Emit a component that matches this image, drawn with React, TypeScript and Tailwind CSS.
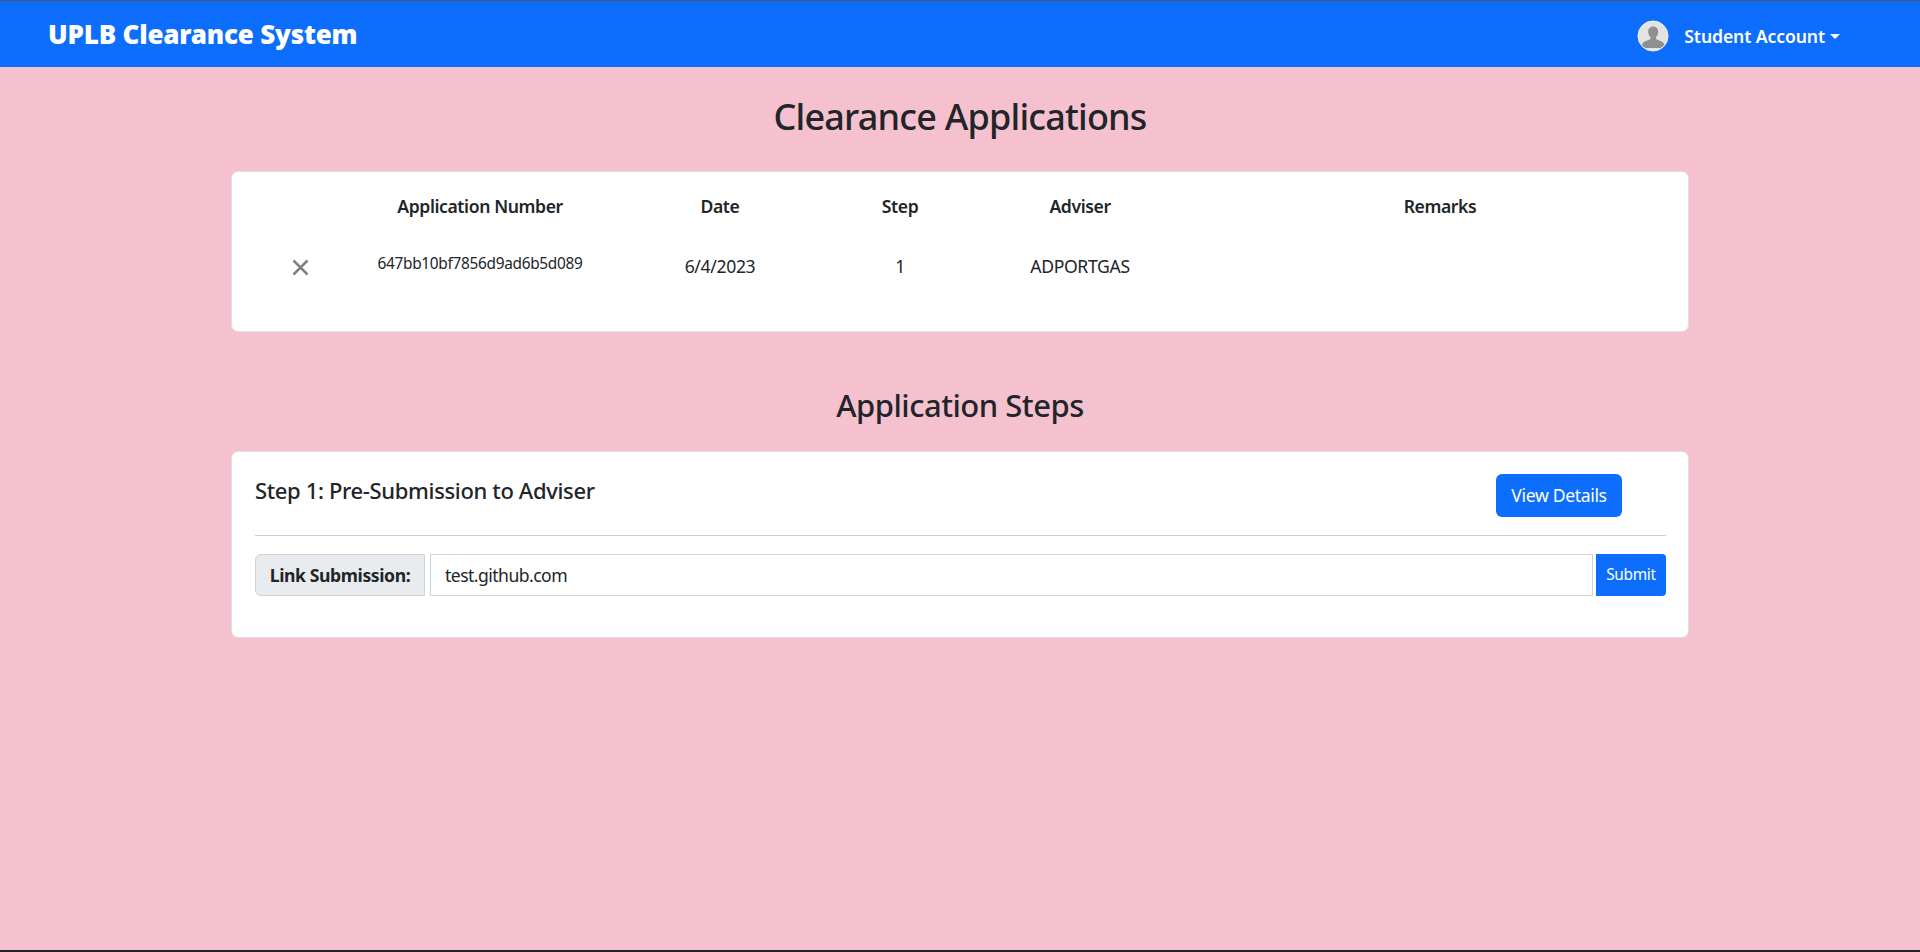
const font = "font-['Noto_Sans',sans-serif]"

const Avatar = () => (
  <svg width="32" height="32" viewBox="0 0 32 32">
    <defs>
      <clipPath id="avatar-clip">
        <circle cx="16" cy="16" r="14.5" />
      </clipPath>
    </defs>
    <circle cx="16" cy="16" r="15" fill="#e3e3e3" />
    <g clipPath="url(#avatar-clip)" fill="#8f8f8f">
      <path d="M16 6.5c-3 0-4.8 2.3-4.8 5.3 0 2.2.9 4.2 2.2 5.4v1.9c-.6 1-5.6 1.7-7.4 3.6-1 1.1-1.3 3-1.3 5.3h23c0-2.3-.3-4.2-1.3-5.3-1.8-1.9-6.8-2.6-7.4-3.6v-1.9c1.3-1.2 2.2-3.2 2.2-5.4 0-3-1.8-5.3-4.8-5.3z" />
    </g>
    <circle cx="16" cy="16" r="15" fill="none" stroke="#f4f4f4" strokeWidth="1" />
  </svg>
)

const Navbar = () => (
  <nav className="flex h-[66px] items-center justify-between bg-[#0d6efd] pl-12 pr-[80px] text-white">
    <span className="text-[26px] leading-none font-black tracking-[-0.2px]">UPLB Clearance System</span>
    <div className="flex items-center pt-[4px]">
      <Avatar />
      <span className="ml-[15px] text-[17.6px] font-semibold tracking-[-0.1px]">Student Account</span>
      <span className="ml-[5px] h-0 w-0 border-x-[5px] border-t-[5.5px] border-x-transparent border-t-white" />
    </div>
  </nav>
)

const columns = 'grid grid-cols-[120px_240px_240px_120px_240px_480px] text-center'

const ApplicationsTable = () => (
  <div className="mx-[231px] mt-[24px] h-[161px] rounded-[7px] border border-black/[0.125] bg-white px-[8px] pt-[21px] text-[#212529]">
    <div className={`${columns} text-[17.6px] leading-[26px] font-semibold tracking-[-0.4px]`}>
      <div />
      <div>Application Number</div>
      <div>Date</div>
      <div>Step</div>
      <div>Adviser</div>
      <div>Remarks</div>
    </div>
    <div className={`${columns} mt-[34px] items-start text-[17.6px] leading-[26px] tracking-[-0.35px]`}>
      <div className="flex justify-center pt-[5px]">
        <svg width="19" height="19" viewBox="0 0 19 19" fill="none" stroke="#808080" strokeWidth="2.5">
          <path d="M2.5 2.5l14 14M16.5 2.5l-14 14" />
        </svg>
      </div>
      <div className="text-[15.4px] leading-[22px] tracking-[-0.3px]">647bb10bf7856d9ad6b5d089</div>
      <div>6/4/2023</div>
      <div>1</div>
      <div>ADPORTGAS</div>
      <div />
    </div>
  </div>
)

const StepCard = () => (
  <div className="mx-[231px] mt-[23px] h-[187px] rounded-[7px] border border-black/[0.125] bg-white pt-[22px] pr-[22px] pl-[23px] text-[#212529]">
    <div className="flex items-start justify-between pr-[44px]">
      <h5 className="mt-[1px] text-[22px] leading-[30px] font-medium tracking-[-0.35px]">Step 1: Pre-Submission to Adviser</h5>
      <button className="h-[43px] w-[126px] rounded-[6px] bg-[#0d6efd] text-[17.6px] tracking-[-0.35px] text-white">View Details</button>
    </div>
    <hr className="mt-[18px] border-t border-[#cfd0d4]" />
    <div className="mt-[18px] flex h-[42px]">
      <div className="flex w-[170px] items-center justify-center rounded-l-[6px] border border-[#ced4da] bg-[#e9ecef] text-[17.6px] font-bold tracking-[-0.4px]">
        Link Submission:
      </div>
      <input
        readOnly
        value="test.github.com"
        className="ml-[5px] min-w-0 flex-1 border border-[#ced4da] bg-white px-[14px] text-[17.6px] tracking-[-0.55px] text-[#212529] outline-none"
      />
      <button className="ml-[3px] w-[70px] rounded-r-[4px] bg-[#0d6efd] text-[15.4px] tracking-[-0.3px] text-white">Submit</button>
    </div>
  </div>
)

export default function App() {
  return (
    <div className={`${font} flex h-[952px] flex-col overflow-hidden border-t border-b-2 border-t-[#4a5568] border-b-[#222222] bg-[#f5c1cf]`}>
      <Navbar />
      <h1 className="mt-[20px] text-center text-[36px] leading-[60px] font-medium tracking-[-0.8px] text-[#212529]">Clearance Applications</h1>
      <ApplicationsTable />
      <h2 className="mt-[51px] text-center text-[31px] leading-[45px] font-medium tracking-[-0.5px] text-[#212529]">Application Steps</h2>
      <StepCard />
    </div>
  )
}
